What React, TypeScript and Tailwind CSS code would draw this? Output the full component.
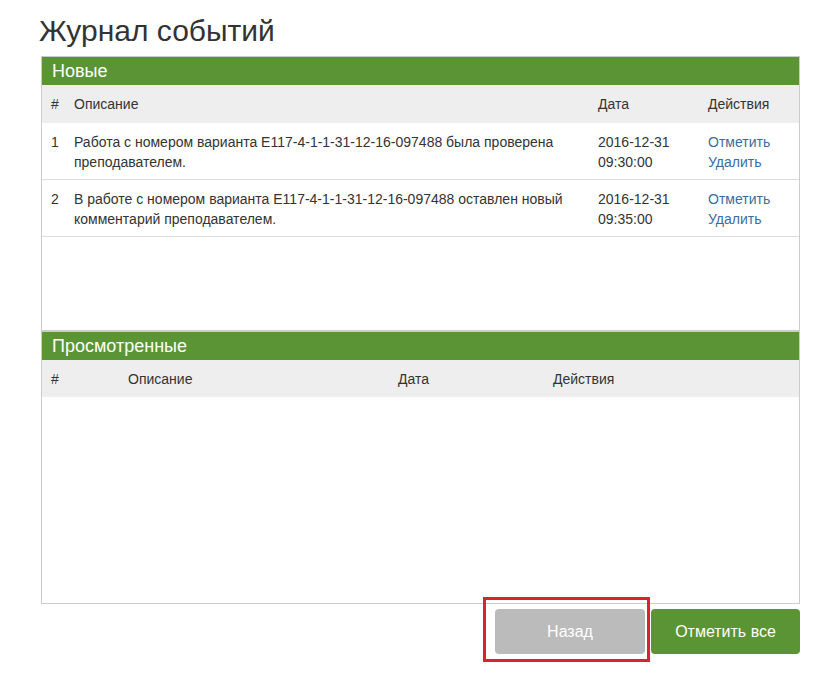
const newEvents = [
  {
    id: 1,
    text: 'Работа с номером варианта E117-4-1-1-31-12-16-097488 была проверена преподавателем.',
    date: '2016-12-31',
    time: '09:30:00',
  },
  {
    id: 2,
    text: 'В работе с номером варианта E117-4-1-1-31-12-16-097488 оставлен новый комментарий преподавателем.',
    date: '2016-12-31',
    time: '09:35:00',
  },
]

const App = () => {
  return (
    <div className="min-h-screen bg-white font-['Liberation_Sans',Arial,sans-serif] text-[14px] text-[#333]">
      <div className="w-[760px] ml-[40px] pt-[14px]">
        <h1 className="text-[30px] leading-[33px] ml-[-1px]">Журнал событий</h1>

        <div className="mt-[9px] ml-[1px] border border-[#ccc]">
          {/* new */}
          <div className="h-[275px] border-b-2 border-[#ccc]">
            <div className="h-[28px] bg-[#5a9434] px-[10px] text-[18px] leading-[29px] font-medium text-white">
              Новые
            </div>
            <div className="flex h-[38px] items-center bg-[#eee] pt-[1px]">
              <div className="w-[32px] pl-[9px]">#</div>
              <div className="w-[524px]">Описание</div>
              <div className="w-[110px]">Дата</div>
              <div>Действия</div>
            </div>
            {newEvents.map((e) => (
              <div key={e.id} className="flex border-b border-[#ddd] pt-[9px] pb-[7px] leading-[20px]">
                <div className="w-[32px] shrink-0 pl-[9px]">{e.id}</div>
                <div className="w-[524px] shrink-0 pr-[10px]">{e.text}</div>
                <div className="w-[110px] shrink-0">
                  {e.date}
                  <br />
                  {e.time}
                </div>
                <div className="text-[#3a6d9e]">
                  <a href="#">Отметить</a>
                  <br />
                  <a href="#">Удалить</a>
                </div>
              </div>
            ))}
          </div>

          {/* viewed */}
          <div className="h-[271px]">
            <div className="h-[28px] bg-[#5a9434] px-[10px] text-[18px] leading-[29px] font-medium text-white">
              Просмотренные
            </div>
            <div className="flex h-[37px] items-center bg-[#eee] pt-[1px]">
              <div className="w-[86px] pl-[9px]">#</div>
              <div className="w-[270px]">Описание</div>
              <div className="w-[155px]">Дата</div>
              <div>Действия</div>
            </div>
          </div>
        </div>

        <div className="mt-[-7px] flex justify-end">
          <div className="border-[3px] border-[#d9232e] pl-[9px] pr-[2px] pt-[9px] pb-[5px]">
            <button className="h-[45px] w-[150px] rounded-[4px] bg-[#bbb] text-[16px] text-white">Назад</button>
          </div>
          <div className="pt-[12px] ml-[1px]">
            <button className="h-[45px] w-[149px] rounded-[4px] bg-[#5a9434] text-[16px] text-white">
              Отметить все
            </button>
          </div>
        </div>
      </div>
    </div>
  )
}

export default App
